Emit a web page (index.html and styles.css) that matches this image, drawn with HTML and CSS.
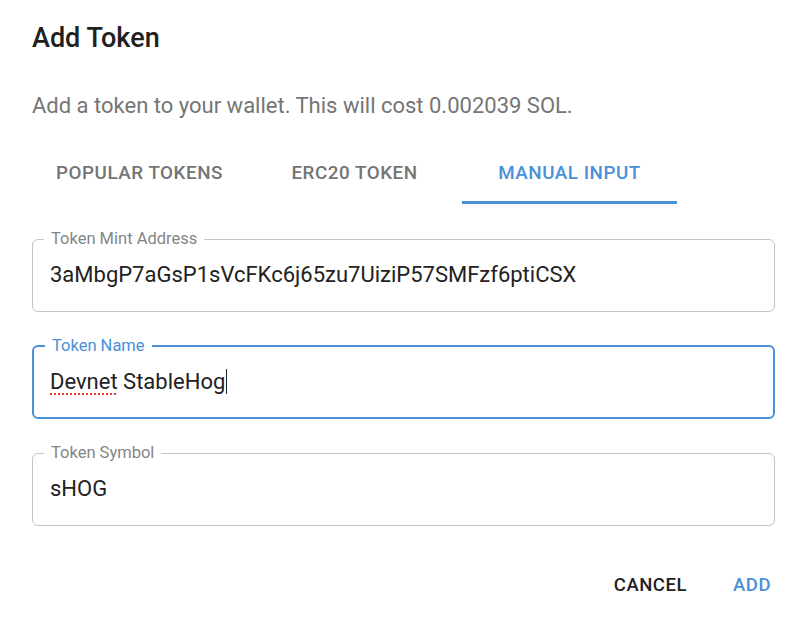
FILE: index.html
```html
<!DOCTYPE html>
<html lang="en">
<head>
  <meta charset="UTF-8">
  <meta name="viewport" content="width=device-width, initial-scale=1.0">
  <title>Add Token</title>
  <link rel="stylesheet" href="styles.css">
</head>
<body>
  <div class="dialog">
    <h2 class="dialog-title">Add Token</h2>
    <p class="dialog-text">Add a token to your wallet. This will cost 0.002039 SOL.</p>

    <div class="tabs">
      <div class="tab">Popular Tokens</div>
      <div class="tab">ERC20 Token</div>
      <div class="tab active">Manual Input</div>
    </div>

    <div class="fields">
      <fieldset class="field">
        <legend>Token Mint Address</legend>
        <div class="value">3aMbgP7aGsP1sVcFKc6j65zu7UiziP57SMFzf6ptiCSX</div>
      </fieldset>
      <fieldset class="field focused">
        <legend>Token Name</legend>
        <div class="value"><span class="misspelled">Devnet</span> StableHog<span class="caret"></span></div>
      </fieldset>
      <fieldset class="field">
        <legend>Token Symbol</legend>
        <div class="value">sHOG</div>
      </fieldset>
    </div>

    <div class="actions">
      <button class="btn">Cancel</button>
      <button class="btn primary">Add</button>
    </div>
  </div>
</body>
</html>
```

FILE: styles.css
```css
body {
  margin: 0;
  background: #fff;
  font-family: Roboto, "Liberation Sans", Arial, sans-serif;
  color: rgba(0, 0, 0, 0.87);
}
.dialog {
  padding: 22px 25px 0 32px;
}
.dialog-title {
  margin: 0;
  font-size: 27px;
  line-height: 32px;
  font-weight: 500;
  color: #212121;
}
.dialog-text {
  margin: 38px 0 0;
  font-size: 22px;
  line-height: 28px;
  color: #757575;
}
.tabs {
  display: flex;
  margin-top: 20px;
}
.tab {
  width: 215px;
  padding: 21px 0 16px;
  font-size: 18.8px;
  line-height: 24px;
  font-weight: 500;
  letter-spacing: 0.02857em;
  text-transform: uppercase;
  text-align: center;
  color: #757575;
  border-bottom: 3px solid transparent;
}
.tab.active {
  color: #4a90d9;
  border-bottom-color: #4a90d9;
}
.fields {
  display: flex;
  flex-direction: column;
  gap: 24px;
  margin-top: 25px;
}
.field {
  margin: 0;
  padding: 0 17px 23px;
  border: 1px solid #c4c4c4;
  border-radius: 6px;
  min-width: 0;
}
.field legend {
  margin-left: -6px;
  padding: 0 7px;
  font-size: 16.5px;
  line-height: 20px;
  color: #858585;
}
.field .value {
  padding-top: 13px;
  font-size: 22px;
  line-height: 26px;
  color: #222;
}
.field.focused {
  border: 2px solid #4a90d9;
  padding: 0 16px 22px;
}
.field.focused legend {
  margin-left: -5px;
  color: #4a90d9;
}
.misspelled {
  text-decoration: underline dotted #e53935;
  text-decoration-thickness: 2px;
  text-underline-offset: 4px;
}
.caret {
  display: inline-block;
  width: 1px;
  height: 25px;
  margin-left: 1px;
  background: #222;
  vertical-align: -5px;
}
.actions {
  display: flex;
  justify-content: flex-end;
  gap: 22px;
  margin-top: 39px;
  margin-right: -8px;
}
.btn {
  background: none;
  border: none;
  padding: 8px 12px;
  font-family: inherit;
  font-size: 18.5px;
  line-height: 24px;
  font-weight: 500;
  letter-spacing: 0.02857em;
  text-transform: uppercase;
  color: #222;
  cursor: pointer;
}
.btn.primary {
  color: #4a90d9;
}
```
